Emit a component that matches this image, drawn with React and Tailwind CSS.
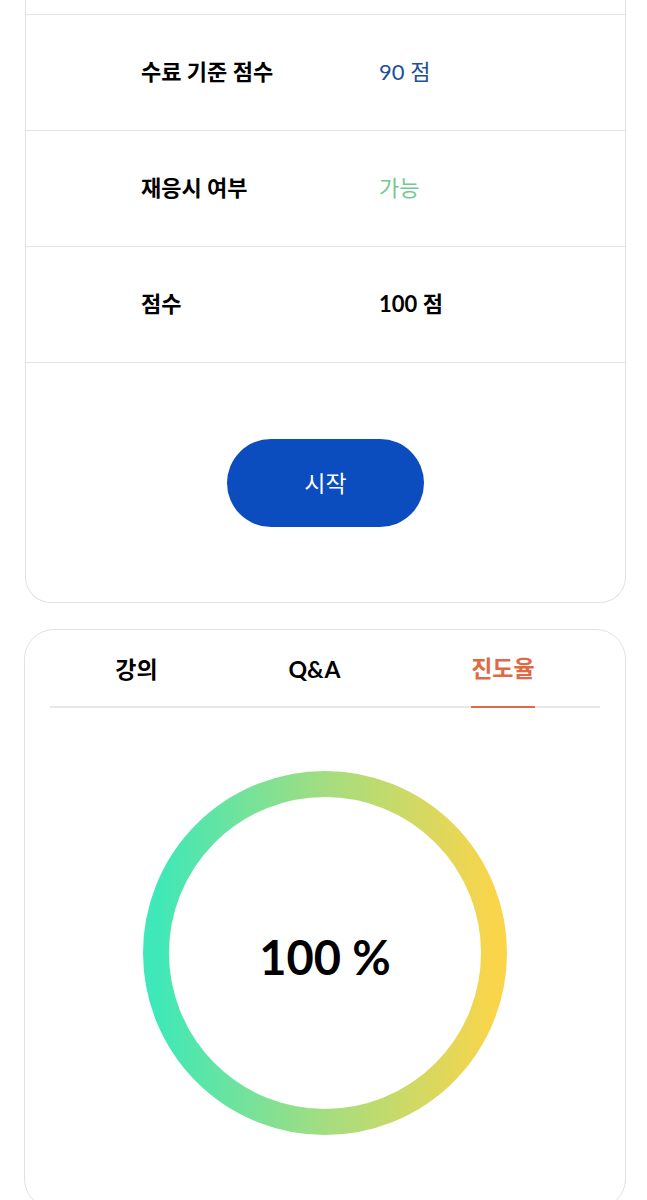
import React from "react";

const font = { fontFamily: 'Lato, "Noto Sans CJK KR", sans-serif' };

function InfoRow({ label, value, valueClass }) {
  return (
    <div className="flex h-[116px] items-center border-b border-[#e4e4e4] pb-[3px]">
      <div className="w-[353px] pl-[115px] text-[22px] font-bold text-black">{label}</div>
      <div className={"text-[22px] " + valueClass}>{value}</div>
    </div>
  );
}

function ProgressRing({ percent }) {
  return (
    <div className="relative h-[364px] w-[364px]">
      <svg width="364" height="364" viewBox="0 0 364 364">
        <defs>
          <linearGradient id="ring" x1="0" y1="0" x2="1" y2="0">
            <stop offset="0%" stopColor="#3ee8b8" />
            <stop offset="50%" stopColor="#a3dd80" />
            <stop offset="100%" stopColor="#fad54a" />
          </linearGradient>
        </defs>
        <circle cx="182" cy="182" r="169" fill="none" stroke="url(#ring)" strokeWidth="26" />
      </svg>
      <div className="absolute inset-0 flex items-center justify-center pt-[8px] text-[47px] font-bold text-black">
        {percent} %
      </div>
    </div>
  );
}

export default function App() {
  return (
    <div className="min-h-screen overflow-hidden bg-white" style={font}>
      <section className="ml-[25px] mr-[21px] mt-[-101px] rounded-b-[26px] border border-t-0 border-[#e2e2e2]">
        <div className="h-[116px] border-b border-[#e4e4e4]" />
        <InfoRow label="수료 기준 점수" value="90 점" valueClass="text-[#1d4f9c]" />
        <InfoRow label="재응시 여부" value="가능" valueClass="text-[#76c98e]" />
        <InfoRow label="점수" value="100 점" valueClass="font-bold text-black" />
        <div className="flex justify-center pb-[75px] pt-[76px]">
          <button className="h-[88px] w-[197px] rounded-full bg-[#0b4cbf] text-[23px] text-white">
            시작
          </button>
        </div>
      </section>

      <section className="ml-[24px] mr-[21px] mt-[26px] h-[580px] rounded-[30px] border border-[#e2e2e2] px-[25px]">
        <div className="flex h-[78px] justify-around border-b-2 border-[#e8e8e8]">
          <button className="mb-[-2px] flex items-center text-[23px] font-bold text-black">강의</button>
          <button className="mb-[-2px] flex items-center text-[23px] font-bold text-black">Q&amp;A</button>
          <button className="mb-[-2px] flex items-center border-b-2 border-[#e06a45] text-[23px] font-bold text-[#e06a45]">
            진도율
          </button>
        </div>
        <div className="flex justify-center pt-[63px]">
          <ProgressRing percent={100} />
        </div>
      </section>
    </div>
  );
}
